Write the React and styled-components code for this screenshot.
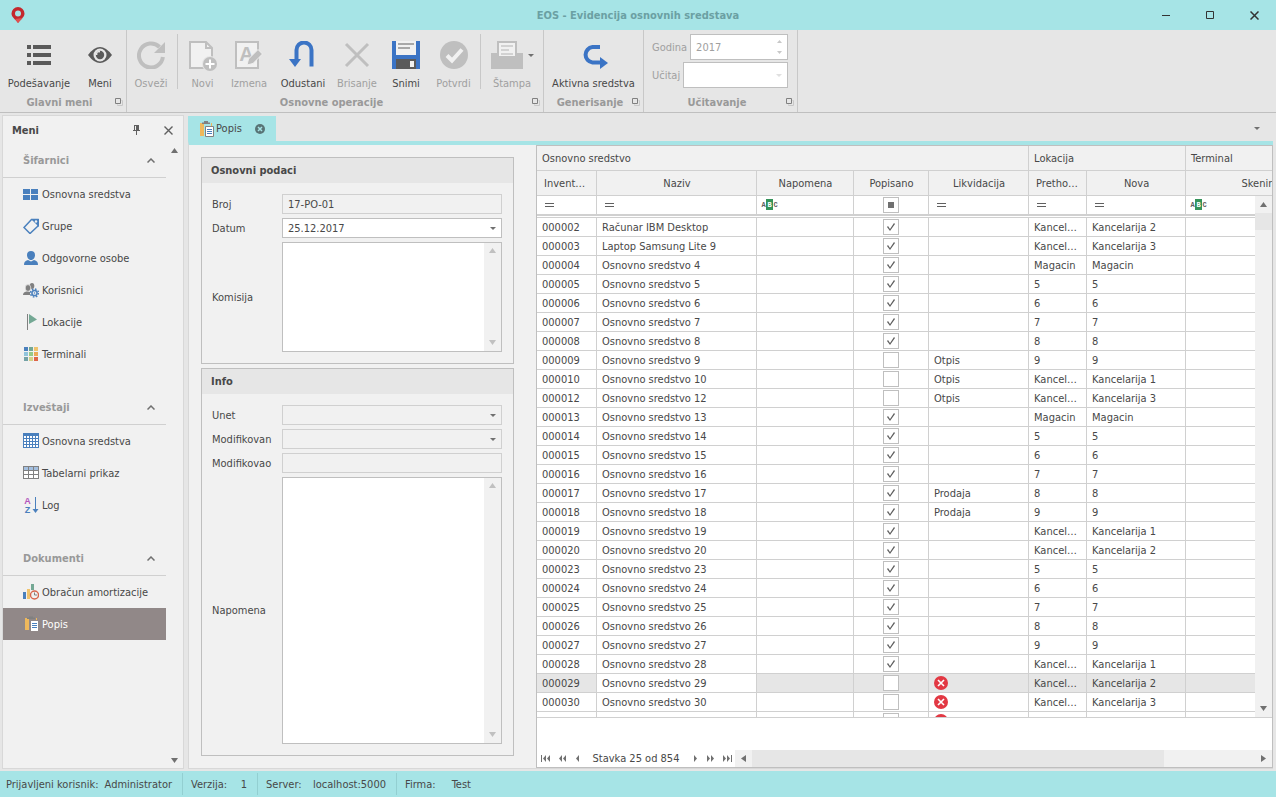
import React, { useState } from 'react';
import styled, { createGlobalStyle, css } from 'styled-components';

const GlobalStyle = createGlobalStyle`
    * {
        box-sizing: border-box;
    }

    body {
        margin: 0;
        background: #e6e6e6;
        color: #484848;
        font-family: "DejaVu Sans Condensed", "DejaVu Sans", sans-serif;
        font-size: 11px;
        line-height: 15px;
    }

    button, input, select, textarea {
        font: inherit;
        color: inherit;
    }

    svg {
        display: block;
        flex: none;
    }
`

const Window = styled.div`
    display: flex;
    flex-direction: column;
    height: 100vh;
    min-height: 600px;
`

const PlainButton = styled.button`
    display: flex;
    align-items: center;
    justify-content: center;
    padding: 0;
    border: 0;
    background: none;
`

/* title bar */

const TitleBar = styled.header`
    display: grid;
    grid-template-columns: 132px 1fr 132px;
    align-items: center;
    height: 30px;
    flex: none;
    background: #a6e4e6;
`

const AppIcon = styled.div`
    padding-left: 11px;
`

const Title = styled.h1`
    margin: 0;
    text-align: center;
    font-size: 11px;
    font-weight: 700;
    color: #6ba0a3;
`

const WindowButtons = styled.div`
    display: flex;

    button {
        width: 44px;
        height: 30px;
    }
`

/* ribbon */

const Ribbon = styled.div`
    display: flex;
    height: 83px;
    flex: none;
    border-bottom: 1px solid #bfbfbf;
`

const RibbonGroup = styled.section`
    display: flex;
    flex-direction: column;
    border-right: 1px solid #c8c8c8;
`

const RibbonItems = styled.div`
    display: flex;
    flex: 1;
    padding-right: ${props => props.$flush ? 0 : 4}px;
`

const RibbonButton = styled(PlainButton)`
    flex-direction: column;
    justify-content: flex-start;
    gap: 7px;
    width: ${props => props.$width}px;
    padding-top: 11px;
    white-space: nowrap;

    &:disabled {
        color: #a0a0a0;
    }
`

const RibbonIcon = styled.span`
    display: flex;
    align-items: flex-start;
    height: 28px;
`

const RibbonSeparator = styled.div`
    width: 1px;
    height: 55px;
    margin: 4px ${props => props.$gap || 2}px 0;
    background: #c8c8c8;
`

const RibbonCaption = styled.div`
    display: grid;
    grid-template-columns: 4px 1fr 11px;
    align-items: center;
    height: 20px;
    text-align: center;
    font-weight: 700;
    color: #999999;
`

const PrinterWrapper = styled.span`
    display: flex;
    align-items: center;
    gap: 5px;
    margin-right: -1px;
`

const RibbonFields = styled.div`
    display: flex;
    flex: 1;
    flex-direction: column;
    gap: 2px;
    padding: 4px 9px 0 8px;
`

const RibbonField = styled.div`
    display: flex;
    align-items: center;
    gap: 3px;
    width: 136px;
    color: #a0a0a0;
`

const FieldBox = styled.div`
    display: flex;
    flex: 1;
    align-items: center;
    min-width: 0;
    height: ${props => props.$tall ? 26 : 20}px;
    padding-right: 5px;
    border: 1px solid ${props => props.$readOnly ? '#d0d0d0' : '#bfbfbf'};
    background: ${props => props.$readOnly ? '#f1f1f1' : '#ffffff'};

    input, select {
        flex: 1;
        min-width: 0;
        height: 100%;
        padding: 0 5px;
        border: 0;
        outline: 0;
        opacity: 1;
        background: transparent;
        appearance: none;
    }

    input[type=number]::-webkit-inner-spin-button {
        appearance: none;
    }
`

const Spinner = styled.span`
    display: flex;
    flex-direction: column;
    gap: 8px;
`

/* work area */

const Workspace = styled.div`
    display: flex;
    flex: 1;
    gap: 4px;
    min-height: 0;
    padding: 2px 3px 2px 2px;
`

const Sidebar = styled.aside`
    display: flex;
    flex-direction: column;
    width: 182px;
    flex: none;
    border: 1px solid #d8d8d8;
    background: #f1f1f1;
`

const SidebarHeader = styled.div`
    display: flex;
    align-items: center;
    height: 28px;
    flex: none;
    padding: 0 9px;

    h2 {
        flex: 1;
        margin: 0;
        font-size: 11px;
    }

    button {
        width: 12px;
        margin-left: 20px;
    }
`

const SidebarBody = styled.div`
    display: flex;
    flex: 1;
    min-height: 0;
`

const Menu = styled.nav`
    flex: 1;
    overflow: hidden;
`

const MenuGroup = styled.section`
    margin-bottom: 21px;

    ul {
        margin: 0;
        padding: 0;
        list-style: none;
    }
`

const MenuGroupHeader = styled.button`
    display: flex;
    align-items: center;
    justify-content: space-between;
    width: 100%;
    height: 34px;
    padding: 0 11px 0 20px;
    border: 0;
    border-bottom: 1px solid #d0d0d0;
    background: none;
    font-weight: 700;
    color: #999999;
`

const MenuLink = styled.a`
    display: flex;
    align-items: center;
    gap: 3px;
    height: 32px;
    padding-left: 20px;
    text-decoration: none;
    white-space: nowrap;
    color: ${props => props.$active ? '#ffffff' : '#484848'};
    background: ${props => props.$active ? '#918888' : 'transparent'};
`

const SidebarScroll = styled.div`
    display: flex;
    flex-direction: column;
    align-items: center;
    justify-content: space-between;
    width: 17px;
    padding: 4px 0 5px;
`

const Documents = styled.main`
    display: flex;
    flex: 1;
    flex-direction: column;
    min-width: 0;
    padding-top: 1px;
`

const TabStrip = styled.div`
    display: flex;
    align-items: center;
    justify-content: space-between;
    height: 25px;
    flex: none;
    padding-right: 13px;
`

const Tab = styled.div`
    display: flex;
    align-items: center;
    width: 88px;
    height: 25px;
    padding: 0 11px;
    background: #a6e4e6;

    span {
        flex: 1;
        padding-left: 1px;
    }
`

const Page = styled.div`
    display: flex;
    flex: 1;
    min-height: 0;
    border: 1px solid #d8d8d8;
    border-top: 4px solid #a6e4e6;
    border-right: 0;
    background: #f1f1f1;
`

const FormColumn = styled.form`
    display: flex;
    flex-direction: column;
    gap: 4px;
    width: 347px;
    flex: none;
    padding: 12px 22px 12px 12px;
`

const Panel = styled.fieldset`
    display: flex;
    flex-direction: column;
    flex: ${props => props.$grow ? 1 : 'none'};
    min-height: 0;
    margin: 0;
    padding: 0;
    border: 1px solid #bfbfbf;
`

const PanelTitle = styled.h2`
    margin: 0;
    padding: 5px 9px;
    font-size: 11px;
    background: #e6e6e6;
`

const PanelBody = styled.div`
    display: flex;
    flex: 1;
    flex-direction: column;
    gap: 4px;
    min-height: 0;
    padding: 11px 11px 11px 10px;
`

const FormRow = styled.div`
    display: flex;
    align-items: center;
    min-height: 0;
    flex: ${props => props.$grow ? 1 : 'none'};

    label {
        width: 70px;
    }
`

const MemoBox = styled.div`
    display: flex;
    flex: 1;
    align-self: stretch;
    min-height: 110px;
    border: 1px solid #bfbfbf;
    background: #ffffff;

    textarea {
        flex: 1;
        min-width: 0;
        padding: 3px 5px;
        border: 0;
        outline: 0;
        resize: none;
        background: transparent;
    }
`

const MemoScroll = styled.div`
    display: flex;
    flex-direction: column;
    align-items: center;
    justify-content: space-between;
    width: 17px;
    padding: 5px 0 6px;
    background: #f1f1f1;
`

/* grid */

const Grid = styled.section`
    display: flex;
    flex: 1;
    flex-direction: column;
    min-width: 0;
    border: 1px solid #bfbfbf;
    background: #ffffff;
`

const GridView = styled.div`
    position: relative;
    flex: 1;
    min-height: 0;
    overflow: hidden;
    border-bottom: 1px solid #d0d0d0;
`

const Table = styled.table`
    width: 809px;
    table-layout: fixed;
    border-spacing: 0;

    th, td {
        padding: 0 5px;
        border-right: 1px solid #d0d0d0;
        border-bottom: 1px solid #d0d0d0;
        overflow: hidden;
        line-height: 14px;
        white-space: nowrap;
        text-overflow: ellipsis;
    }
`

const HeaderRow = styled.tr`
    th {
        height: 25px;
        padding-top: 2px;
        font-weight: 400;
        text-align: ${props => props.$band ? 'left' : 'center'};
        background: #f1f1f1;
    }
`

const ColumnHeader = styled.th`
    && {
        padding-right: 6px;
        padding-left: 7px;
    }
`

const FilterRow = styled.tr`
    td {
        height: 20px;
        padding-left: 4px;
        border-bottom: 2px solid #d0d0d0;
    }
`

const GapRow = styled.tr`
    td {
        height: 2px;
        border-right: 0;
    }
`

const Row = styled.tr`
    td {
        height: 19px;
        padding-top: 2px;

        ${props => props.$selected && css`
            background: #e6e6e6;

            &:nth-child(2) {
                background: #ffffff;
            }
        `}
    }
`

const IconCell = styled.td`
    && {
        padding-top: 0;
    }
`

const Check = styled.input`
    display: block;
    width: 16px;
    height: 16px;
    margin: 0 auto;
    border: 1px solid #bfbfbf;
    background: #ffffff;
    appearance: none;

    &:checked::before {
        content: "";
        display: block;
        width: 14px;
        height: 14px;
        background: #606060;
        clip-path: polygon(3px 7px, 4px 6px, 6px 9px, 10px 3px, 11px 4px, 6px 11px);
    }
`

const MixedCheck = styled(Check)`
    &::before {
        content: "";
        display: block;
        width: 6px;
        height: 6px;
        margin: 4px;
        background: #707070;
    }
`

const VerticalScroll = styled.div`
    position: absolute;
    top: 50px;
    right: 0;
    bottom: 0;
    display: flex;
    flex-direction: column;
    width: 17px;
    background: #f1f1f1;

    button {
        height: 17px;
    }
`

const VerticalThumb = styled.div`
    height: 17px;
    margin-bottom: auto;
    background: #e6e6e6;
`

const GridFooter = styled.div`
    display: flex;
    height: 49px;
    flex: none;
    padding-top: 32px;
`

const Pager = styled.div`
    display: flex;
    align-items: center;
    width: 198px;

    button {
        width: 16px;
        height: 17px;
    }

    span {
        width: 102px;
        text-align: center;
    }
`

const HorizontalScroll = styled.div`
    display: flex;
    flex: 1;
    background: #f1f1f1;

    button {
        width: 17px;
    }
`

const HorizontalThumb = styled.div`
    width: 412px;
    margin-right: auto;
    background: #e6e6e6;
`

const StatusBar = styled.footer`
    display: flex;
    align-items: center;
    height: 26px;
    flex: none;
    padding: 2px 0;
    background: #a6e4e6;
`

const StatusItem = styled.div`
    display: flex;
    align-items: center;
    justify-content: space-between;
    width: ${props => props.$width}px;
    height: 22px;
    padding: 0 10px 0 ${props => props.$first ? 6 : 8}px;
    border-right: ${props => props.$last ? 0 : '1px solid #93cfd1'};
`

const Arrow = ({ direction = 'down', color = '#707070' }) => {
    const points = {
        up: '0,5 7,5 3.5,0',
        down: '0,0 7,0 3.5,5',
        left: '5,0 5,7 0,3.5',
        right: '0,0 0,7 5,3.5',
    };
    const flat = direction === 'up' || direction === 'down';
    return (
        <svg width={flat ? 7 : 5} height={flat ? 5 : 7} viewBox={flat ? '0 0 7 5' : '0 0 5 7'}>
            <polygon points={points[direction]} fill={color} />
        </svg>
    );
};

const Caret = ({ color = '#707070' }) => (
    <svg width="6" height="3" viewBox="0 0 6 3"><path d="M0 0h6L3 3z" fill={color} /></svg>
);

const PagerIcon = ({ count, bar, flip }) => (
    <svg width="11" height="7" viewBox="0 0 11 7" fill="#707070">
        <g transform={flip ? 'translate(11 0) scale(-1 1)' : undefined}>
            {bar && <path d="M1 0h1v7H1z" />}
            {count === 1 ? <path d="M7 0v7L4 3.500z" /> : <path d="M6 0v7L3 3.500zM10 0v7L7 3.500z" />}
        </g>
    </svg>
);

const Launcher = () => (
    <svg width="9" height="9" viewBox="0 0 9 9" fill="none">
        <path d="M6.500 2.500h1v5h-5v-1" stroke="#c8c8c8" />
        <path d="M.5.5h5v5h-5z" stroke="#808080" />
    </svg>
);

const ribbonIcons = {
    list: (
        <svg width="28" height="28" viewBox="0 0 28 28" fill="#5a5a5a">
            <path d="M2 4h4v4H2zM8 4h18v4H8zM2 12h4v4H2zM8 12h18v4H8zM2 20h4v4H2zM8 20h18v4H8z" />
        </svg>
    ),
    eye: (
        <svg width="28" height="28" viewBox="0 0 28 28" fill="none">
            <path d="M2 14Q8 6 14 6t12 8q-6 8-12 8T2 14z" fill="#5a5a5a" />
            <circle cx="14" cy="14" r="6.500" fill="#e6e6e6" />
            <circle cx="14" cy="14" r="4.200" fill="#5a5a5a" />
            <path d="M14 9.500v4.500H9.500A4.500 4.500 0 0 1 14 9.500z" fill="#e6e6e6" />
            <circle cx="13" cy="13" r="1.800" fill="#5a5a5a" />
        </svg>
    ),
    refresh: (
        <svg width="28" height="28" viewBox="0 0 28 28">
            <path d="M22.500 6A12 12 0 1 0 25.900 16" fill="none" stroke="#bfbfbf" strokeWidth="4" />
            <path d="M28 1v11H17z" fill="#bfbfbf" />
        </svg>
    ),
    add: (
        <svg width="28" height="30" viewBox="0 0 28 30" fill="none">
            <path d="M1 1h16l6 6v20H1z" fill="#f1f1f1" stroke="#bfbfbf" strokeWidth="2" />
            <path d="M17 1v6h6" stroke="#bfbfbf" strokeWidth="2" />
            <circle cx="21" cy="23" r="8" fill="#e6e6e6" />
            <circle cx="21" cy="23" r="7" fill="#bfbfbf" />
            <path d="M16.500 23h9M21 18.500v9" stroke="#fff" strokeWidth="2" />
        </svg>
    ),
    edit: (
        <svg width="28" height="28" viewBox="0 0 28 28">
            <path d="M1 1h22v26H1z" fill="#f1f1f1" stroke="#bfbfbf" strokeWidth="2" />
            <text x="11.500" y="20" textAnchor="middle" fontSize="20" fontWeight="700" fontFamily="Liberation Sans, sans-serif" fill="#bfbfbf">A</text>
            <path d="M12 24l1.500-6L23 8.500l4.500 4.500L18 22.500z" fill="#bfbfbf" stroke="#f1f1f1" />
        </svg>
    ),
    undo: (
        <svg width="28" height="28" viewBox="0 0 28 28">
            <path d="M8.500 20V9.500a7.500 7.500 0 0 1 15 0V26" transform="translate(-1 -.5)" fill="none" stroke="#3b74c5" strokeWidth="4" />
            <path d="M0 18h12l-6 8z" fill="#3b74c5" />
        </svg>
    ),
    cross: (
        <svg width="28" height="28" viewBox="0 0 28 28">
            <path d="M3 3l22 22M25 3L3 25" stroke="#bfbfbf" strokeWidth="3" />
        </svg>
    ),
    save: (
        <svg width="28" height="28" viewBox="0 0 28 28">
            <path d="M0 0h28v28H0z" fill="#3b74c5" />
            <path d="M4 0h20v14H4z" fill="#f1f1f1" />
            <path d="M6 2h16v2H6zM6 6h12v2H6z" fill="#a8a8a8" />
            <path d="M4 18h20v10H4z" fill="#5a5a5a" />
            <path d="M18 20h4v6h-4z" fill="#f1f1f1" />
        </svg>
    ),
    confirm: (
        <svg width="28" height="28" viewBox="0 0 28 28">
            <circle cx="14" cy="14" r="14" fill="#bfbfbf" />
            <path d="M7 14.500l5 5L22 8.500" fill="none" stroke="#f1f1f1" strokeWidth="4" />
        </svg>
    ),
    printer: (
        <svg width="32" height="28" viewBox="0 0 32 28">
            <path d="M0 12h32v16H0z" fill="#bfbfbf" />
            <path d="M7 1h18v15H7z" fill="#f1f1f1" stroke="#bfbfbf" strokeWidth="2" />
            <path d="M10 4h12v2H10zM10 8h8v2h-8zM10 12h12v2H10z" fill="#d2d2d2" />
        </svg>
    ),
    redo: (
        <svg width="28" height="28" viewBox="0 0 28 28">
            <path d="M20 6h-7.500a7.800 7.800 0 0 0 0 15.500H21" fill="none" stroke="#3b74c5" strokeWidth="4" />
            <path d="M20 16v12l8-6z" fill="#3b74c5" />
        </svg>
    ),
};

const clipboardIcon = (
    <svg width="16" height="16" viewBox="0 0 16 16">
        <path d="M1 2h4v13H1zM12 2h1v3h-1z" fill="#eeb85c" />
        <path d="M3 1.500h2V0h4v1.500h2V3H3z" fill="#808080" />
        <path d="M6.500 5.500h8v10h-8z" fill="#fff" stroke="#808080" />
        <path d="M8 8h5v1H8zM8 10h5v1H8zM8 12h5v1H8z" fill="#4a80bd" />
    </svg>
);

const menuIcons = {
    tiles: (
        <svg width="16" height="16" viewBox="0 0 16 16" fill="#4a80bd">
            <path d="M0 3h7v5H0zM8 3h7v5H8zM0 9h7v5H0zM8 9h7v5H8z" />
        </svg>
    ),
    tag: (
        <svg width="16" height="16" viewBox="0 0 16 16">
            <path d="M1 9.500l7.500-8H15v6.500l-8 7.500z" fill="#f1f1f1" stroke="#4a80bd" strokeWidth="1.500" />
            <path d="M8 1h8v8z" fill="#4a80bd" />
            <circle cx="13" cy="3.500" r="1.200" fill="#f1f1f1" />
        </svg>
    ),
    person: (
        <svg width="16" height="16" viewBox="0 0 16 16" fill="#4a80bd">
            <path d="M8 1c2.500 0 4 1.500 4 4s-1.500 5-4 5-4-2.500-4-5 1.500-4 4-4z" />
            <path d="M1 15c0-3 1-4 4-5l3 1.500L11 10c3 1 4 2 4 5z" />
        </svg>
    ),
    users: (
        <svg width="16" height="16" viewBox="0 0 16 16" fill="#808080">
            <ellipse cx="9" cy="4" rx="2.300" ry="3" />
            <ellipse cx="5" cy="6" rx="2.800" ry="3.400" stroke="#f1f1f1" strokeWidth=".7" />
            <path d="M0 13c0-2 1-3 3.500-3.500L7 10v3z" />
            <circle cx="11.500" cy="11" r="4" fill="none" stroke="#4a80bd" strokeWidth="1.500" strokeDasharray="1.600 1.540" />
            <circle cx="11.500" cy="11" r="2.600" fill="#f1f1f1" stroke="#4a80bd" strokeWidth="1.500" />
            <circle cx="11.500" cy="11" r=".8" fill="#4a80bd" />
        </svg>
    ),
    flag: (
        <svg width="16" height="16" viewBox="0 0 16 16">
            <path d="M4 0h1v16H4z" fill="#808080" />
            <path d="M6 0l8 5.500L6 10z" fill="#74a894" />
        </svg>
    ),
    palette: (
        <svg width="16" height="16" viewBox="0 0 16 16">
            <path d="M1 1h4v4H1z" fill="#4a80bd" />
            <path d="M6 1h4v4H6z" fill="#74a894" />
            <path d="M11 1h4v4h-4z" fill="#f0c36d" />
            <path d="M1 6h4v4H1z" fill="#90c4dc" />
            <path d="M6 6h4v4H6z" fill="#96c987" />
            <path d="M11 6h4v4h-4z" fill="#ecaa56" />
            <path d="M1 11h4v4H1z" fill="#74a2a6" />
            <path d="M6 11h4v4H6z" fill="#d4d087" />
            <path d="M11 11h4v4h-4z" fill="#de6548" />
        </svg>
    ),
    grid: (
        <svg width="16" height="16" viewBox="0 0 16 16" fill="#4a80bd">
            <path d="M0 0h16v15H0z" />
            <path d="M1 4h14M1 7h14M1 10h14M1 13h14" stroke="#fff" strokeWidth="2" strokeDasharray="2 1" />
        </svg>
    ),
    table: (
        <svg width="16" height="16" viewBox="0 0 16 16">
            <path d="M0 1h16v13H0z" fill="#808080" />
            <path d="M1 3.500h14" stroke="#a3bfe0" strokeWidth="3" strokeDasharray="4 1" />
            <path d="M1 7.500h14M1 11.500h14" stroke="#fff" strokeWidth="3" strokeDasharray="4 1" />
        </svg>
    ),
    sort: (
        <svg width="16" height="16" viewBox="0 0 16 16" fontSize="9" fontWeight="700" fontFamily="Liberation Sans, sans-serif" textAnchor="middle">
            <text x="4.500" y="7" fill="#b455bd">A</text>
            <text x="4.500" y="16" fill="#4a80bd">Z</text>
            <path d="M12 0h1v13h-1z" fill="#4a80bd" />
            <path d="M9.500 12h6l-3 4z" fill="#4a80bd" />
        </svg>
    ),
    chart: (
        <svg width="16" height="16" viewBox="0 0 16 16">
            <path d="M0 8h3v7H0z" fill="#4a80bd" />
            <path d="M4 5h3v10H4z" fill="#f0c36d" />
            <path d="M8 0h3v6H8z" fill="#74a894" />
            <circle cx="11.500" cy="11" r="4" fill="#f1f1f1" stroke="#d7654d" strokeWidth="1.400" />
            <path d="M11.500 8.500V11H14" fill="none" stroke="#808080" />
        </svg>
    ),
    clipboard: (
        <svg width="16" height="16" viewBox="0 0 16 16">
            <path d="M2 2h4v12H2zM13 2h1v2h-1z" fill="#eeb85c" />
            <path d="M4 1.500h2V.5h4v1h2V3H4z" fill="#808080" />
            <path d="M8 5h7v10H8z" fill="#fff" />
            <path d="M9 7h5v1H9zM9 9h5v1H9zM9 11h5v1H9z" fill="#4a80bd" />
        </svg>
    ),
};

const menu = [
    {
        title: 'Šifarnici',
        items: [
            ['Osnovna sredstva', 'tiles'],
            ['Grupe', 'tag'],
            ['Odgovorne osobe', 'person'],
            ['Korisnici', 'users'],
            ['Lokacije', 'flag'],
            ['Terminali', 'palette'],
        ],
    },
    {
        title: 'Izveštaji',
        items: [
            ['Osnovna sredstva', 'grid'],
            ['Tabelarni prikaz', 'table'],
            ['Log', 'sort'],
        ],
    },
    {
        title: 'Dokumenti',
        items: [
            ['Obračun amortizacije', 'chart'],
            ['Popis', 'clipboard'],
        ],
    },
];

// code, name, checked, write-off, location
const assets = [
    ['000002', 'Računar IBM Desktop', true, '', 'Kancelarija 2'],
    ['000003', 'Laptop Samsung Lite 9', true, '', 'Kancelarija 3'],
    ['000004', 'Osnovno sredstvo 4', true, '', 'Magacin'],
    ['000005', 'Osnovno sredstvo 5', true, '', '5'],
    ['000006', 'Osnovno sredstvo 6', true, '', '6'],
    ['000007', 'Osnovno sredstvo 7', true, '', '7'],
    ['000008', 'Osnovno sredstvo 8', true, '', '8'],
    ['000009', 'Osnovno sredstvo 9', false, 'Otpis', '9'],
    ['000010', 'Osnovno sredstvo 10', false, 'Otpis', 'Kancelarija 1'],
    ['000012', 'Osnovno sredstvo 12', false, 'Otpis', 'Kancelarija 3'],
    ['000013', 'Osnovno sredstvo 13', true, '', 'Magacin'],
    ['000014', 'Osnovno sredstvo 14', true, '', '5'],
    ['000015', 'Osnovno sredstvo 15', true, '', '6'],
    ['000016', 'Osnovno sredstvo 16', true, '', '7'],
    ['000017', 'Osnovno sredstvo 17', true, 'Prodaja', '8'],
    ['000018', 'Osnovno sredstvo 18', true, 'Prodaja', '9'],
    ['000019', 'Osnovno sredstvo 19', true, '', 'Kancelarija 1'],
    ['000020', 'Osnovno sredstvo 20', true, '', 'Kancelarija 2'],
    ['000023', 'Osnovno sredstvo 23', true, '', '5'],
    ['000024', 'Osnovno sredstvo 24', true, '', '6'],
    ['000025', 'Osnovno sredstvo 25', true, '', '7'],
    ['000026', 'Osnovno sredstvo 26', true, '', '8'],
    ['000027', 'Osnovno sredstvo 27', true, '', '9'],
    ['000028', 'Osnovno sredstvo 28', true, '', 'Kancelarija 1'],
    ['000029', 'Osnovno sredstvo 29', false, 'error', 'Kancelarija 2'],
    ['000030', 'Osnovno sredstvo 30', false, 'error', 'Kancelarija 3'],
    ['000031', 'Osnovno sredstvo 31', false, 'error', 'Magacin'],
];

const columnWidths = [60, 160, 97, 75, 100, 58, 99, 160];

const EqualsIcon = () => (
    <svg width="18" height="14" viewBox="0 0 18 14"><path d="M4 5h9v1H4zM4 8h9v1H4z" fill="#606060" /></svg>
);

const ContainsIcon = () => (
    <svg width="18" height="14" viewBox="0 0 18 14" fontSize="7" fontWeight="700" fontFamily="Liberation Mono, monospace" textAnchor="middle">
        <path d="M5 1h7v11H5z" fill="#35935a" />
        <text x="2.500" y="9" fill="#606060">A</text>
        <text x="8.500" y="9" fill="#ffffff">B</text>
        <text x="14.500" y="9" fill="#606060">C</text>
    </svg>
);

const ErrorIcon = () => (
    <svg width="14" height="14" viewBox="0 0 14 14">
        <circle cx="7" cy="7" r="7" fill="#e23843" />
        <path d="M4 4l6 6M10 4l-6 6" stroke="#fff" strokeWidth="1.600" />
    </svg>
);

const RibbonItem = ({ label, icon, width, disabled }) => (
    <RibbonButton $width={width} disabled={disabled}>
        {icon === 'printer'
            ? <PrinterWrapper>{ribbonIcons.printer}<Caret /></PrinterWrapper>
            : <RibbonIcon>{ribbonIcons[icon]}</RibbonIcon>
        }
        {label}
    </RibbonButton>
);

const Caption = ({ children }) => (
    <RibbonCaption>
        <span />
        {children}
        <Launcher />
    </RibbonCaption>
);

const Memo = ({ id }) => (
    <MemoBox>
        <textarea id={id} />
        <MemoScroll>
            <Arrow direction="up" color="#c0c0c0" />
            <Arrow color="#c0c0c0" />
        </MemoScroll>
    </MemoBox>
);

const App = () => {
    const [collapsed, setCollapsed] = useState({});
    const [checks, setChecks] = useState(assets.map(asset => asset[2]));
    const [selected, setSelected] = useState(24);

    const toggleCheck = (index) => {
        setChecks(checks.map((value, i) => i === index ? !value : value));
    }

    return (
        <Window>
            <GlobalStyle />
            <TitleBar>
                <AppIcon>
                    <svg width="14" height="16" viewBox="0 0 14 16">
                        <path d="M7 0a6.500 6.500 0 0 1 6.500 6.500C13.500 10 10 12 7 16 4 12 .5 10 .5 6.500A6.500 6.500 0 0 1 7 0z" fill="#c4282d" />
                        <path d="M11.500 11L7 16l-3-4z" fill="#e0504f" />
                        <circle cx="7" cy="6.500" r="3" fill="#a6e4e6" />
                    </svg>
                </AppIcon>
                <Title>EOS - Evidencija osnovnih sredstava</Title>
                <WindowButtons>
                    <PlainButton aria-label="Minimize">
                        <svg width="8" height="8" viewBox="0 0 8 8"><path d="M0 4h8v1H0z" fill="#333" /></svg>
                    </PlainButton>
                    <PlainButton aria-label="Maximize">
                        <svg width="8" height="8" viewBox="0 0 8 8"><path d="M.5.5h7v7h-7z" fill="none" stroke="#333" /></svg>
                    </PlainButton>
                    <PlainButton aria-label="Close">
                        <svg width="9" height="9" viewBox="0 0 9 9"><path d="M.5.5l8 8M8.500.5l-8 8" stroke="#333" strokeWidth="1.500" /></svg>
                    </PlainButton>
                </WindowButtons>
            </TitleBar>

            <Ribbon>
                <RibbonGroup>
                    <RibbonItems>
                        <RibbonItem label="Podešavanje" icon="list" width={78} />
                        <RibbonItem label="Meni" icon="eye" width={44} />
                    </RibbonItems>
                    <Caption>Glavni meni</Caption>
                </RibbonGroup>
                <RibbonGroup>
                    <RibbonItems>
                        <RibbonItem label="Osveži" icon="refresh" width={48} disabled />
                        <RibbonSeparator />
                        <RibbonItem label="Novi" icon="add" width={45} disabled />
                        <RibbonItem label="Izmena" icon="edit" width={48} disabled />
                        <RibbonItem label="Odustani" icon="undo" width={60} />
                        <RibbonItem label="Brisanje" icon="cross" width={48} disabled />
                        <RibbonItem label="Snimi" icon="save" width={50} />
                        <RibbonItem label="Potvrdi" icon="confirm" width={45} disabled />
                        <RibbonSeparator $gap={4} />
                        <RibbonItem label="Štampa" icon="printer" width={54} disabled />
                    </RibbonItems>
                    <Caption>Osnovne operacije</Caption>
                </RibbonGroup>
                <RibbonGroup>
                    <RibbonItems $flush>
                        <RibbonItem label="Aktivna sredstva" icon="redo" width={99} />
                    </RibbonItems>
                    <Caption>Generisanje</Caption>
                </RibbonGroup>
                <RibbonGroup>
                    <RibbonFields>
                        <RibbonField>
                            <label htmlFor="godina">Godina</label>
                            <FieldBox $tall>
                                <input id="godina" type="number" defaultValue="2017" />
                                <Spinner>
                                    <svg width="5" height="3" viewBox="0 0 5 3"><path d="M0 3h5L2.500 0z" fill="#c8c8c8" /></svg>
                                    <svg width="5" height="3" viewBox="0 0 5 3"><path d="M0 0h5L2.500 3z" fill="#c8c8c8" /></svg>
                                </Spinner>
                            </FieldBox>
                        </RibbonField>
                        <RibbonField>
                            <label htmlFor="ucitaj">Učitaj</label>
                            <FieldBox $tall>
                                <select id="ucitaj" disabled />
                                <Caret color="#e0e0e0" />
                            </FieldBox>
                        </RibbonField>
                    </RibbonFields>
                    <Caption>Učitavanje</Caption>
                </RibbonGroup>
            </Ribbon>

            <Workspace>
                <Sidebar>
                    <SidebarHeader>
                        <h2>Meni</h2>
                        <PlainButton aria-label="Pin">
                            <svg width="9" height="10" viewBox="0 0 9 10" fill="#606060">
                                <path d="M2 0h5v5H2zM1 5h7v1H1zM4 6h1v4H4z" />
                                <path d="M3 1h1v4H3z" fill="#f1f1f1" />
                            </svg>
                        </PlainButton>
                        <PlainButton aria-label="Close menu">
                            <svg width="9" height="9" viewBox="0 0 9 9"><path d="M.5.5l8 8M8.500.5l-8 8" stroke="#606060" strokeWidth="1.400" /></svg>
                        </PlainButton>
                    </SidebarHeader>
                    <SidebarBody>
                        <Menu>
                            {menu.map((group) => (
                                <MenuGroup key={group.title}>
                                    <MenuGroupHeader onClick={() => setCollapsed({ ...collapsed, [group.title]: !collapsed[group.title] })}>
                                        {group.title}
                                        <svg width="8" height="5" viewBox="0 0 8 5"><path d="M.5 4.500L4 1l3.500 3.500" fill="none" stroke="#707070" strokeWidth="1.500" /></svg>
                                    </MenuGroupHeader>
                                    {!collapsed[group.title] && <ul>
                                        {group.items.map(([label, icon]) => (
                                            <li key={label}>
                                                <MenuLink href="#" $active={label === 'Popis'}>{menuIcons[icon]}{label}</MenuLink>
                                            </li>
                                        ))}
                                    </ul>}
                                </MenuGroup>
                            ))}
                        </Menu>
                        <SidebarScroll>
                            <Arrow direction="up" />
                            <Arrow />
                        </SidebarScroll>
                    </SidebarBody>
                </Sidebar>

                <Documents>
                    <TabStrip>
                        <Tab>
                            {clipboardIcon}
                            <span>Popis</span>
                            <PlainButton aria-label="Close tab">
                                <svg width="10" height="10" viewBox="0 0 10 10">
                                    <circle cx="5" cy="5" r="5" fill="#587476" />
                                    <path d="M3 3l4 4M7 3L3 7" stroke="#a6e4e6" strokeWidth="1.500" />
                                </svg>
                            </PlainButton>
                        </Tab>
                        <Caret />
                    </TabStrip>
                    <Page>
                        <FormColumn>
                            <Panel>
                                <PanelTitle>Osnovni podaci</PanelTitle>
                                <PanelBody>
                                    <FormRow>
                                        <label htmlFor="broj">Broj</label>
                                        <FieldBox $readOnly><input id="broj" defaultValue="17-PO-01" readOnly /></FieldBox>
                                    </FormRow>
                                    <FormRow>
                                        <label htmlFor="datum">Datum</label>
                                        <FieldBox><input id="datum" defaultValue="25.12.2017" /><Caret /></FieldBox>
                                    </FormRow>
                                    <FormRow>
                                        <label htmlFor="komisija">Komisija</label>
                                        <Memo id="komisija" />
                                    </FormRow>
                                </PanelBody>
                            </Panel>
                            <Panel $grow>
                                <PanelTitle>Info</PanelTitle>
                                <PanelBody>
                                    <FormRow>
                                        <label htmlFor="unet">Unet</label>
                                        <FieldBox $readOnly><select id="unet" disabled /><Caret /></FieldBox>
                                    </FormRow>
                                    <FormRow>
                                        <label htmlFor="modifikovan">Modifikovan</label>
                                        <FieldBox $readOnly><select id="modifikovan" disabled /><Caret /></FieldBox>
                                    </FormRow>
                                    <FormRow>
                                        <label htmlFor="modifikovao">Modifikovao</label>
                                        <FieldBox $readOnly><input id="modifikovao" readOnly /></FieldBox>
                                    </FormRow>
                                    <FormRow $grow>
                                        <label htmlFor="napomena">Napomena</label>
                                        <Memo id="napomena" />
                                    </FormRow>
                                </PanelBody>
                            </Panel>
                        </FormColumn>

                        <Grid>
                            <GridView>
                                <Table>
                                    <colgroup>
                                        {columnWidths.map((width, index) => <col key={index} width={width} />)}
                                    </colgroup>
                                    <thead>
                                        <HeaderRow $band>
                                            <th colSpan={5}>Osnovno sredstvo</th>
                                            <th colSpan={2}>Lokacija</th>
                                            <th>Terminal</th>
                                        </HeaderRow>
                                        <HeaderRow>
                                            <ColumnHeader>Inventarski broj</ColumnHeader>
                                            <ColumnHeader>Naziv</ColumnHeader>
                                            <ColumnHeader>Napomena</ColumnHeader>
                                            <ColumnHeader>Popisano</ColumnHeader>
                                            <ColumnHeader>Likvidacija</ColumnHeader>
                                            <ColumnHeader>Prethodna</ColumnHeader>
                                            <ColumnHeader>Nova</ColumnHeader>
                                            <ColumnHeader>Skenirano</ColumnHeader>
                                        </HeaderRow>
                                        <FilterRow>
                                            <td><EqualsIcon /></td>
                                            <td><EqualsIcon /></td>
                                            <td><ContainsIcon /></td>
                                            <td><MixedCheck type="checkbox" aria-label="Popisano filter" /></td>
                                            <td><EqualsIcon /></td>
                                            <td><EqualsIcon /></td>
                                            <td><EqualsIcon /></td>
                                            <td><ContainsIcon /></td>
                                        </FilterRow>
                                        <GapRow><td colSpan={8} /></GapRow>
                                    </thead>
                                    <tbody>
                                        {assets.map(([code, name, , writeOff, location], index) => (
                                            <Row key={code} $selected={selected === index} onClick={() => setSelected(index)}>
                                                <td>{code}</td>
                                                <td>{name}</td>
                                                <td />
                                                <IconCell><Check type="checkbox" aria-label={name} checked={checks[index]} onChange={() => toggleCheck(index)} /></IconCell>
                                                {writeOff === 'error'
                                                    ? <IconCell><ErrorIcon /></IconCell>
                                                    : <td>{writeOff}</td>
                                                }
                                                <td>{location}</td>
                                                <td>{location}</td>
                                                <td />
                                            </Row>
                                        ))}
                                    </tbody>
                                </Table>
                                <VerticalScroll>
                                    <PlainButton aria-label="Scroll up"><Arrow direction="up" /></PlainButton>
                                    <VerticalThumb />
                                    <PlainButton aria-label="Scroll down"><Arrow /></PlainButton>
                                </VerticalScroll>
                            </GridView>
                            <GridFooter>
                                <Pager>
                                    <PlainButton aria-label="First"><PagerIcon count={2} bar /></PlainButton>
                                    <PlainButton aria-label="Previous page"><PagerIcon count={2} /></PlainButton>
                                    <PlainButton aria-label="Previous"><PagerIcon count={1} /></PlainButton>
                                    <span>Stavka 25 od 854</span>
                                    <PlainButton aria-label="Next"><PagerIcon count={1} flip /></PlainButton>
                                    <PlainButton aria-label="Next page"><PagerIcon count={2} flip /></PlainButton>
                                    <PlainButton aria-label="Last"><PagerIcon count={2} bar flip /></PlainButton>
                                </Pager>
                                <HorizontalScroll>
                                    <PlainButton aria-label="Scroll left"><Arrow direction="left" /></PlainButton>
                                    <HorizontalThumb />
                                    <PlainButton aria-label="Scroll right"><Arrow direction="right" /></PlainButton>
                                </HorizontalScroll>
                            </GridFooter>
                        </Grid>
                    </Page>
                </Documents>
            </Workspace>

            <StatusBar>
                <StatusItem $width={183} $first><span>Prijavljeni korisnik:</span><span>Administrator</span></StatusItem>
                <StatusItem $width={75}><span>Verzija:</span><span>1</span></StatusItem>
                <StatusItem $width={139}><span>Server:</span><span>localhost:5000</span></StatusItem>
                <StatusItem $width={84} $last><span>Firma:</span><span>Test</span></StatusItem>
            </StatusBar>
        </Window>
    );
};

export default App;
